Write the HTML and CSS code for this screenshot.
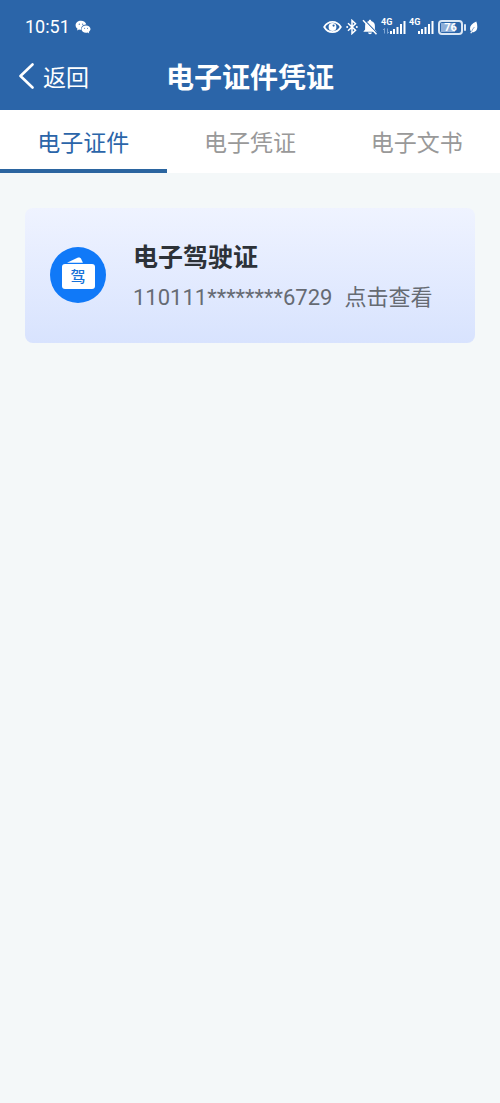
FILE: index.html
```html
<!DOCTYPE html>
<html lang="zh-CN">
<head>
<meta charset="utf-8">
<meta name="viewport" content="width=device-width, initial-scale=1">
<title>电子证件凭证</title>
<link rel="stylesheet" href="styles.css">
</head>
<body>
<header class="top">
  <div class="status">
    <div class="status-left">
      <span class="time">10:51</span>
      <svg class="chat" width="16" height="14" viewBox="0 0 16 14" aria-hidden="true">
        <path fill="#fff" d="M6 .8C2.900.8.6 2.800.6 5.300c0 1.400.7 2.600 1.900 3.400L2 10.500l2-1c.7.2 1.300.3 2 .3h.3C5.700 6.800 8 4.600 11.300 4.600 10.800 2.400 8.700.8 6 .8z"/>
        <path fill="#fff" d="M11 5.400c-2.500 0-4.500 1.600-4.500 3.700s2 3.700 4.500 3.700c.6 0 1.100-.1 1.600-.2l1.600.8-.4-1.500c1-.7 1.700-1.700 1.700-2.800 0-2.100-2-3.700-4.500-3.700z"/>
        <g fill="#2b65a9"><circle cx="4.300" cy="4.200" r=".6"/><circle cx="7.700" cy="4.200" r=".6"/><circle cx="9.600" cy="8.200" r=".5"/><circle cx="12.500" cy="8.200" r=".5"/></g>
      </svg>
    </div>
    <div class="status-right">
      <svg width="19" height="14" viewBox="0 0 19 14" aria-hidden="true">
        <path fill="none" stroke="#fff" stroke-width="1.800" d="M1.200 7C3.200 3.600 6 1.900 9.500 1.900S15.800 3.600 17.800 7c-2 3.400-4.800 5.100-8.300 5.100S3.200 10.400 1.200 7z"/>
        <circle cx="9.500" cy="7" r="3.900" fill="#fff"/><circle cx="10.600" cy="5.600" r="1.100" fill="#2b65a9"/>
      </svg>
      <svg width="12" height="16" viewBox="0 0 12 16" aria-hidden="true">
        <path fill="none" stroke="#fff" stroke-width="1.500" d="M2 4.300l7.500 7L6 14.600V1.400l3.500 3.300L2 11.700"/>
        <circle cx="1.200" cy="8" r="1" fill="#fff"/><circle cx="10.800" cy="8" r="1" fill="#fff"/>
      </svg>
      <svg width="16" height="16" viewBox="0 0 16 16" aria-hidden="true">
        <path fill="#fff" d="M8 .8c.8 0 1.200.5 1.200 1.200 2.300.6 3.700 2.400 3.700 4.800v3.700l1.800 2.300H1.300l1.800-2.300V6.800C3.100 4.400 4.500 2.600 6.800 2c0-.7.4-1.200 1.200-1.200zM6 13.600h4c-.3 1-1 1.600-2 1.600s-1.700-.6-2-1.600z"/>
        <path stroke="#2b65a9" stroke-width="1.200" d="M2.300.8l13 13.500"/><path stroke="#fff" stroke-width="1.500" d="M1 1.200l13.500 14"/>
      </svg>
      <span class="signal">
        <span class="net">4G</span>
        <svg width="25" height="16" viewBox="0 0 25 16" aria-hidden="true">
          <path stroke="#fff" stroke-width="2" d="M10 15v-3M13 15v-5M16.500 15V8M20 15V5M23.500 15V2"/>
          <path fill="none" stroke="#7ea6d4" d="M3.500 14.500V9.500L2 11M6.500 9.500v5L8 13"/>
        </svg>
      </span>
      <span class="signal">
        <span class="net">4G</span>
        <svg width="25" height="16" viewBox="0 0 25 16" aria-hidden="true">
          <path stroke="#fff" stroke-width="2" d="M10 15v-3M13 15v-5M16.500 15V8M20 15V5M23.500 15V2"/>
        </svg>
      </span>
      <span class="battery"><span class="level">76</span></span>
      <svg class="leaf" width="9" height="14" viewBox="0 0 9 14" aria-hidden="true">
        <path fill="#fff" d="M7.300 1.500C3 3.500 1 5.800 1 8.500c0 1.300.4 2.300 1.100 3.100L1.300 13l1 .4.800-1.200c3.300.2 5.200-2.200 5.200-5.500 0-1.900-.3-3.600-1-5.200z"/>
        <path fill="none" stroke="#2b65a9" stroke-width=".6" d="M2.600 11.700C3.300 9.500 4.500 8 5.500 7"/>
      </svg>
    </div>
  </div>
  <div class="nav">
    <button class="back" type="button">
      <svg width="16" height="28" viewBox="0 0 16 28" aria-hidden="true"><path fill="none" stroke="#fff" stroke-width="2.600" stroke-linecap="round" stroke-linejoin="round" d="M13.500 2.500L1.500 14l12 11.500"/></svg>
      <span>返回</span>
    </button>
    <h1 class="title">电子证件凭证</h1>
  </div>
</header>
<nav class="tabs">
  <button class="tab active" type="button">电子证件</button>
  <button class="tab" type="button">电子凭证</button>
  <button class="tab" type="button">电子文书</button>
</nav>
<main class="content">
  <a class="card" href="#license">
    <span class="badge">
      <svg class="wallet" width="56" height="56" viewBox="0 0 56 56" aria-hidden="true">
        <circle cx="28" cy="28" r="28" fill="#1079f8"/>
        <path fill="#fff" d="M17 15.800L27.500 10.800c1.600-.7 3-.2 3.700 1.200l1.700 3.800z"/>
        <rect x="12" y="17" width="33" height="25" rx="3" fill="#fff"/>
      </svg>
      <span class="badge-text">驾</span>
    </span>
    <span class="info">
      <strong class="name">电子驾驶证</strong>
      <span class="detail"><span class="number">110111********6729</span><span>点击查看</span></span>
    </span>
  </a>
</main>
</body>
</html>
```
FILE: styles.css
```css
* {
  box-sizing: border-box;
}

body {
  margin: 0;
  min-height: 100vh;
  background: #f4f8f9;
  font-family: "Noto Sans CJK SC", sans-serif;
}

button {
  margin: 0;
  padding: 0;
  border: 0;
  background: none;
  font: inherit;
  color: inherit;
  cursor: pointer;
}

svg {
  display: block;
  flex: none;
}

.top {
  background: #2b65a9;
  color: #fff;
}

.status {
  display: flex;
  justify-content: space-between;
  align-items: center;
  height: 44px;
  padding: 10px 22px 0 25px;
}

.status-left,
.status-right {
  display: flex;
  align-items: center;
}

.status-left {
  gap: 5px;
}

.status-right {
  gap: 4px;
}

.time {
  font-family: Roboto, sans-serif;
  font-size: 18px;
  line-height: 24px;
}

.signal {
  position: relative;
  margin-left: -1px;
}

.net {
  position: absolute;
  top: -2px;
  left: 0;
  font: bold 9px/10px Roboto, sans-serif;
}

.battery {
  position: relative;
  width: 25px;
  height: 15px;
  padding: 1px;
  border: 2px solid #dbe7f5;
  border-radius: 4px;
}

.battery::after {
  content: "";
  position: absolute;
  top: 2px;
  right: -5px;
  width: 2px;
  height: 7px;
  border-radius: 1px;
  background: #dbe7f5;
}

.level {
  display: block;
  background: linear-gradient(90deg, #8eaed8 76%, transparent 76%);
  font: bold 11px/9px Roboto, sans-serif;
  text-align: center;
}

.leaf {
  margin-left: 2px;
}

.nav {
  display: grid;
  grid-template-columns: 1fr auto 1fr;
  align-items: center;
  height: 66px;
  padding-bottom: 2px;
}

.back {
  display: flex;
  align-items: center;
  gap: 8px;
  padding-left: 19px;
  font-size: 23px;
  line-height: 34px;
}

.title {
  margin: 0;
  font-size: 28px;
  line-height: 40px;
  font-weight: 700;
}

.tabs {
  display: grid;
  grid-template-columns: repeat(3, 1fr);
  background: #fff;
}

.tab {
  height: 63px;
  padding-top: 3px;
  border-bottom: 4px solid transparent;
  font-size: 23px;
  line-height: 34px;
  color: #999;
}

.tab.active {
  border-bottom-color: #2b65a0;
  color: #2b65a9;
}

.content {
  padding: 35px 25px;
}

.card {
  display: flex;
  align-items: center;
  gap: 27px;
  padding: 27px 25px 28px;
  border-radius: 8px;
  background: linear-gradient(#eff3ff, #d8e3fe);
  color: #2d3238;
  text-decoration: none;
}

.badge {
  position: relative;
  flex: none;
}

.badge-text {
  position: absolute;
  top: 18px;
  left: 0;
  width: 100%;
  font-size: 15px;
  line-height: 22px;
  font-weight: 500;
  text-align: center;
  color: #1672d8;
}

.info {
  display: flex;
  flex-direction: column;
}

.name {
  font-size: 25px;
  line-height: 40px;
  font-weight: 700;
}

.detail {
  display: flex;
  flex-wrap: wrap;
  align-items: baseline;
  gap: 0 12px;
  font-size: 22px;
  line-height: 40px;
  color: #666b73;
}

.number {
  font-family: Roboto, sans-serif;
  line-height: 30px;
}
```
